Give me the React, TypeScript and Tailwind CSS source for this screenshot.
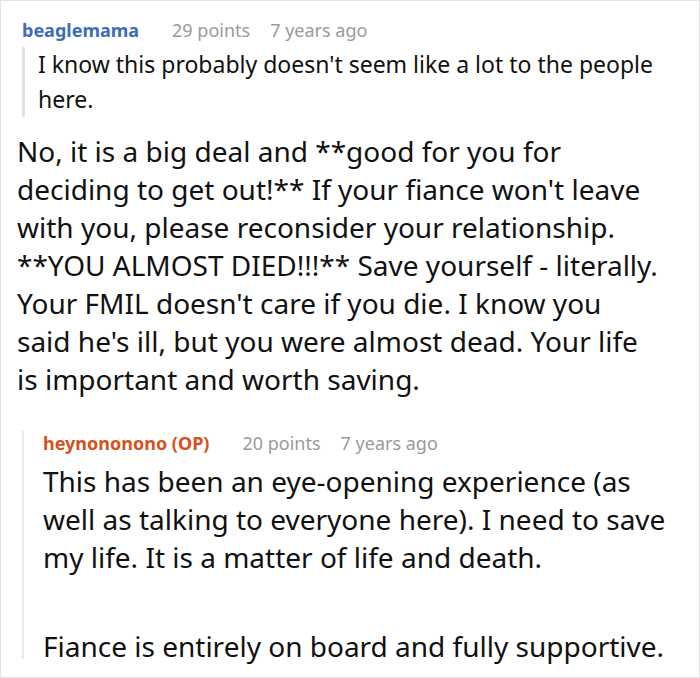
import type { ReactNode } from 'react'

type MetaProps = {
  author: string
  points: string
  age: string
  authorClass: string
}

function CommentMeta({ author, points, age, authorClass }: MetaProps) {
  return (
    <div className="flex items-baseline text-[18px] leading-[24px]">
      <span className={`font-bold ${authorClass}`}>{author}</span>
      <span className="ml-[33px] text-[#9a9a9a]">{points}</span>
      <span className="ml-[20px] text-[#9a9a9a]">{age}</span>
    </div>
  )
}

function Quote({ children }: { children: ReactNode }) {
  return (
    <blockquote className="mt-[5px] border-l-[3px] border-[#e3e3e3] pl-[13px] pr-[30px] text-[23px] leading-[35px] text-[#111]">
      {children}
    </blockquote>
  )
}

export default function App() {
  return (
    <div
      className="h-[678px] w-[700px] overflow-hidden border border-[#e2e2e2] bg-white"
      style={{ fontFamily: '"Noto Sans", "Open Sans", sans-serif' }}
    >
      <div className="pl-[21px] pt-[17px]">
        <CommentMeta author="beaglemama" points="29 points" age="7 years ago" authorClass="text-[#3d6cb8]" />
        <Quote>
          I know this probably doesn't seem like a lot to the people here.
        </Quote>
      </div>

      <p className="mt-[15px] pl-[16px] text-[28px] leading-[38px] text-[#111]">
        No, it is a big deal and **good for you for
        <br />
        deciding to get out!** If your fiance won't leave
        <br />
        with you, please reconsider your relationship.
        <br />
        **YOU ALMOST DIED!!!** Save yourself - literally.
        <br />
        Your FMIL doesn't care if you die. I know you
        <br />
        said he's ill, but you were almost dead. Your life
        <br />
        is important and worth saving.
      </p>

      <div className="ml-[21px] mt-[33px] h-[228px] border-l-[2px] border-[#e8e8e8] pl-[19px]">
        <CommentMeta author="heynononono (OP)" points="20 points" age="7 years ago" authorClass="text-[#d4531c]" />
        <div className="mt-[7px] text-[28px] leading-[38px] text-[#111]">
          <p>
            This has been an eye-opening experience (as
            <br />
            well as talking to everyone here). I need to save
            <br />
            my life. It is a matter of life and death.
          </p>
          <p className="mt-[51px]">Fiance is entirely on board and fully supportive.</p>
        </div>
      </div>
    </div>
  )
}
